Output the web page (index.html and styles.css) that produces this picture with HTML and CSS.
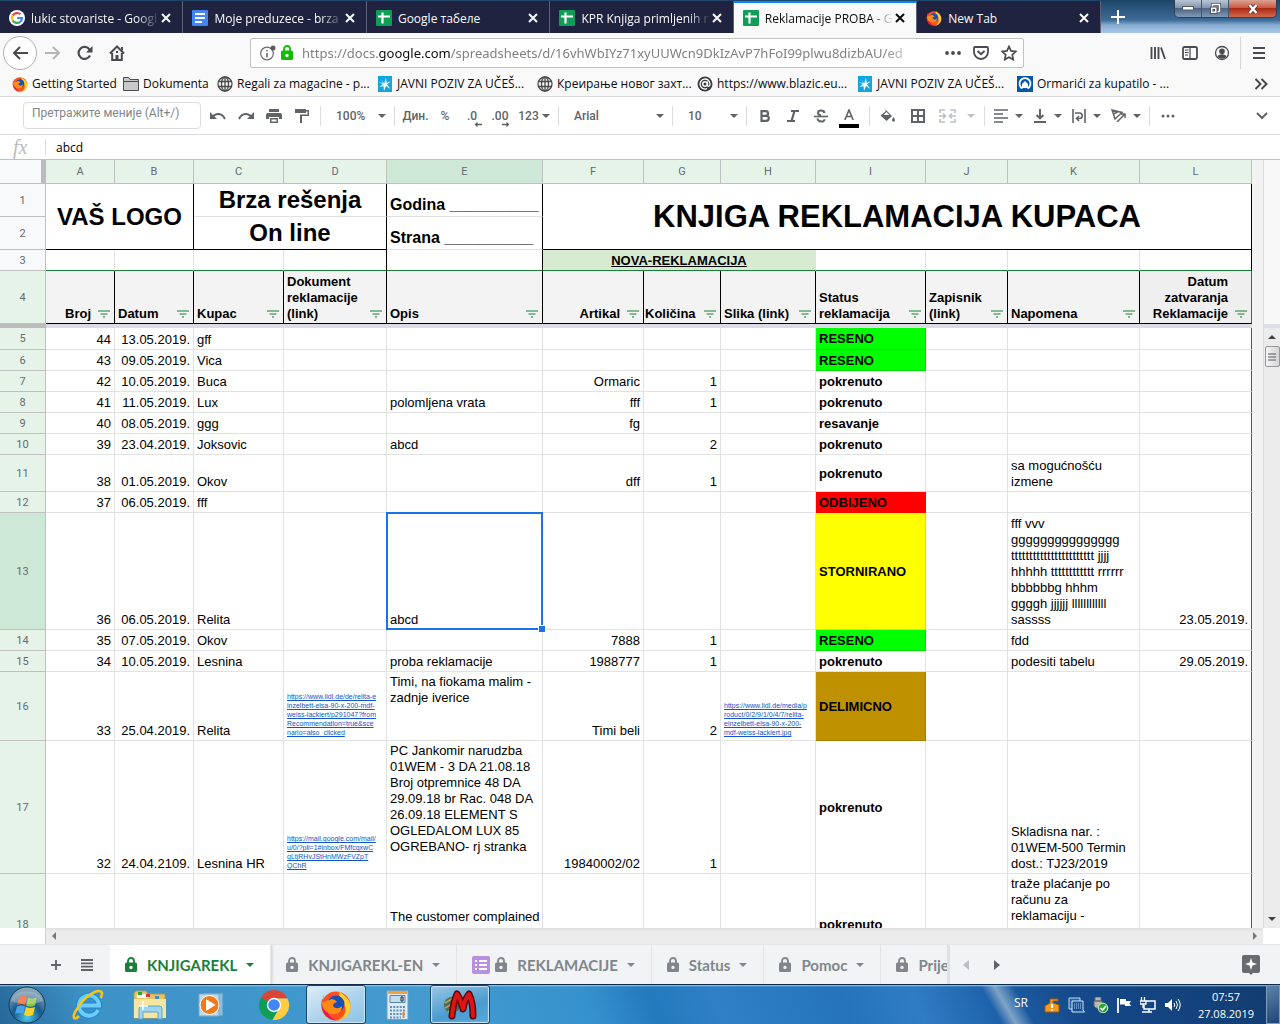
FILE: index.html
```
<!DOCTYPE html>
<html lang="sr">
<head>
  <meta charset="utf-8">
  <title>Reklamacije PROBA</title>
  <link rel="stylesheet" href="styles.css">
</head>
<body>
  <!-- shared icons -->
  <svg class="defs" width="0" height="0">
    <symbol id="x" viewBox="0 0 12 12"><path d="M2 2l8 8M10 2l-8 8" stroke="currentColor" stroke-width="2" fill="none"/></symbol>
    <symbol id="sheets" viewBox="0 0 16 16"><rect width="16" height="16" rx="1" fill="#0f9d58"/><path d="M2 6.500h12M6.500 2.500v11" stroke="#fff" stroke-width="2.200"/></symbol>
    <symbol id="firefox" viewBox="0 0 32 32">
      <circle cx="16" cy="17" r="14.500" fill="#ff4f1f"/>
      <path d="M20 2c2 4 9 6 10.500 14 1 8-5 15-13 15.500 8-4 10-11 6-17-3-4-6-7-3.500-12.500z" fill="#ffcf2e"/>
      <path d="M2 10c-2 9 2 20 14 21.500C9 28 5 22 7 14z" fill="#e3175c"/>
      <circle cx="16" cy="15" r="8.500" fill="#1a4fb5"/>
      <path d="M4 5c0 3 0 5-1 8 3-2 7-1 8-3 2 0 5 1 6 3-3 1-4 2-4 4 2 3 6 3 9 0 0 6-5 9-10 8-6-1-10-5-10-11z" fill="#ff8a16"/>
    </symbol>
    <symbol id="globe" viewBox="0 0 16 16"><g fill="none" stroke="#4a4a4a" stroke-width="1.300"><circle cx="8" cy="8" r="7"/><ellipse cx="8" cy="8" rx="3.500" ry="7"/><path d="M1.500 5.500h13M1.500 10.500h13M8 1v14"/></g></symbol>
    <symbol id="star-burst" viewBox="0 0 14 16"><rect width="14" height="16" fill="#12a5e0"/><path d="M2 3l4.500 4L8 1.500 8.500 7 13 5 9 8.500l3.500 4.500L8 10l-2 5-.5-5-4 1L5 8 1 6.500l5 .5z" fill="#fff"/></symbol>
    <symbol id="down" viewBox="0 0 8 4"><path d="M0 0h8L4 4z" fill="currentColor"/></symbol>
    <symbol id="filter" viewBox="0 0 12 8"><path d="M0 1h12M2.500 4h7M5 7h2" stroke="#188038" stroke-width="1.200"/></symbol>
    <symbol id="lock" viewBox="0 0 12 16"><path d="M3 6V4a3 3 0 0 1 6 0v2" fill="none" stroke="currentColor" stroke-width="1.800"/><path d="M1.500 5.500h9A1.500 1.500 0 0 1 12 7v6.500a1.500 1.500 0 0 1-1.500 1.500h-9A1.500 1.500 0 0 1 0 13.500V7a1.500 1.500 0 0 1 1.500-1.500zM6 8.700a1.700 1.700 0 1 0 0 3.400 1.700 1.700 0 0 0 0-3.400z" fill="currentColor" fill-rule="evenodd"/></symbol>
  </svg>

  <header class="titlebar">
    <div class="browser-tabs">
      <div class="tab">
        <svg width="16" height="16" viewBox="0 0 16 16"><circle cx="8" cy="8" r="8" fill="#fff"/><g fill="none" stroke-width="2.200"><path d="M11.400 4.300A5 5 0 0 0 3.700 5.500" stroke="#ea4335"/><path d="M3.700 5.500a5 5 0 0 0 0 5" stroke="#fbbc05"/><path d="M3.700 10.500a5 5 0 0 0 7.500 1.300" stroke="#34a853"/><path d="M11.200 11.800A5 5 0 0 0 13 8H8.200" stroke="#4285f4"/></g></svg>
        <span class="faded">lukic stovariste - Googl</span>
        <button class="close" aria-label="Close"><svg width="12" height="12"><use href="#x"/></svg></button>
      </div>
      <div class="tab">
        <svg width="16" height="16" viewBox="0 0 16 16"><rect width="16" height="16" rx="1" fill="#4285f4"/><path d="M3 4h10M3 8h10M3 12h7" stroke="#fff" stroke-width="1.800"/></svg>
        <span class="faded">Moje preduzece - brza</span>
        <button class="close" aria-label="Close"><svg width="12" height="12"><use href="#x"/></svg></button>
      </div>
      <div class="tab">
        <svg width="16" height="16"><use href="#sheets"/></svg>
        <span>Google табеле</span>
        <button class="close" aria-label="Close"><svg width="12" height="12"><use href="#x"/></svg></button>
      </div>
      <div class="tab">
        <svg width="16" height="16"><use href="#sheets"/></svg>
        <span class="faded">KPR Knjiga primljenih r</span>
        <button class="close" aria-label="Close"><svg width="12" height="12"><use href="#x"/></svg></button>
      </div>
      <div class="tab active">
        <svg width="16" height="16"><use href="#sheets"/></svg>
        <span class="faded">Reklamacije PROBA - G</span>
        <button class="close" aria-label="Close"><svg width="12" height="12"><use href="#x"/></svg></button>
      </div>
      <div class="tab">
        <svg width="16" height="16"><use href="#firefox"/></svg>
        <span>New Tab</span>
        <button class="close" aria-label="Close"><svg width="12" height="12"><use href="#x"/></svg></button>
      </div>
    </div>
    <button class="new-tab" aria-label="New tab"><svg width="16" height="16" viewBox="0 0 16 16"><path d="M8 1v14M1 8h14" stroke="#fff" stroke-width="2"/></svg></button>
    <div class="window-buttons">
      <button aria-label="Minimize"><svg width="12" height="5" viewBox="0 0 12 5"><rect x=".5" y=".5" width="11" height="3.500" fill="#fff" stroke="#555b6c"/></svg></button>
      <button aria-label="Restore"><svg width="12" height="12" viewBox="0 0 12 12"><path d="M3.500 1.500h7v7h-7z" fill="none" stroke="#4d5468" stroke-width="3"/><path d="M3.500 1.500h7v7h-7z" fill="none" stroke="#fff" stroke-width="1.500"/><rect x="1.500" y="4" width="6.500" height="6.500" fill="#fff" stroke="#4d5468"/><rect x="3.500" y="6" width="2.500" height="2.500" fill="#4d5468"/></svg></button>
      <button class="win-close" aria-label="Close window"><svg width="12" height="10" viewBox="0 0 12 10"><path d="M2.500 1l7 8M9.500 1l-7 8" stroke="#5c3038" stroke-width="4"/><path d="M2.500 1l7 8M9.500 1l-7 8" stroke="#fff" stroke-width="2.400"/></svg></button>
    </div>
  </header>

  <nav class="navbar">
    <button class="back" aria-label="Back"><svg width="18" height="16" viewBox="0 0 18 16"><path d="M17 8H3M9 2L3 8l6 6" fill="none" stroke="#4a4a4f" stroke-width="2"/></svg></button>
    <button class="nav-btn" aria-label="Forward"><svg width="18" height="16" viewBox="0 0 18 16"><path d="M1 8h14M9 2l6 6-6 6" fill="none" stroke="#b5b5b8" stroke-width="2"/></svg></button>
    <button class="nav-btn" aria-label="Reload"><svg width="16" height="16" viewBox="0 0 16 16"><path d="M13 10.500A6 6 0 1 1 12.500 4.500" fill="none" stroke="#4a4a4f" stroke-width="2.200"/><path d="M15.500 1v6.500H9z" fill="#4a4a4f"/></svg></button>
    <button class="nav-btn" aria-label="Home"><svg width="16" height="16" viewBox="0 0 16 16"><path d="M1 8.500L8 1.500l7 7M3.200 8v7h9.600V8" fill="none" stroke="#4a4a4f" stroke-width="2"/><path d="M7 6h2v2H7zM6.500 10h3v5h-3zM12 2h2v4l-2-2z" fill="#4a4a4f"/></svg></button>
    <div class="urlbar">
      <svg width="16" height="16" viewBox="0 0 16 16"><circle cx="7" cy="8.500" r="6.300" fill="none" stroke="#6b6b6f" stroke-width="1.200"/><path d="M7 5v1.500M7 8v4.500" stroke="#6b6b6f" stroke-width="1.600"/><circle cx="13" cy="3" r="2.500" fill="#5b5b5f"/></svg>
      <svg class="padlock" width="12" height="16"><use href="#lock"/></svg>
      <div class="url">https://docs.<b>google.com</b>/spreadsheets/d/16vhWbIYz71xyUUWcn9DkIzAvP7hFoI99plwu8dizbAU/ed</div>
      <button aria-label="Page actions"><svg width="16" height="16" viewBox="0 0 16 16"><g fill="#4a4a4f"><circle cx="2" cy="8" r="1.900"/><circle cx="8" cy="8" r="1.900"/><circle cx="14" cy="8" r="1.900"/></g></svg></button>
      <button aria-label="Pocket"><svg width="16" height="16" viewBox="0 0 16 16"><path d="M2 2h12a1 1 0 0 1 1 1v4a7 7 0 0 1-14 0V3a1 1 0 0 1 1-1z" fill="none" stroke="#4a4a4f" stroke-width="1.800"/><path d="M4.500 6L8 9.300 11.500 6" fill="none" stroke="#4a4a4f" stroke-width="1.900"/></svg></button>
      <button aria-label="Bookmark"><svg width="16" height="16" viewBox="0 0 16 16"><path d="M8 1.500l2 4.400 4.800.6-3.500 3.300.9 4.800L8 12.200l-4.200 2.400.9-4.800L1.200 6.500 6 5.900z" fill="none" stroke="#4a4a4f" stroke-width="1.700"/></svg></button>
    </div>
    <button class="nav-btn" aria-label="Library"><svg width="16" height="16" viewBox="0 0 16 16"><path d="M1.500 2v12M5 2v12M8.500 2v12M11 2.500l4 11.500" stroke="#4a4a4f" stroke-width="1.900"/></svg></button>
    <button class="nav-btn" aria-label="Sidebars"><svg width="16" height="16" viewBox="0 0 16 16"><rect x="1" y="2" width="14" height="12" rx="1.500" fill="none" stroke="#4a4a4f" stroke-width="1.800"/><path d="M8 2v12M3 5h3.500M3 7.500h3.500M3 10h3" stroke="#4a4a4f" stroke-width="1.200"/></svg></button>
    <button class="nav-btn" aria-label="Account"><svg width="16" height="16" viewBox="0 0 16 16"><circle cx="8" cy="8" r="6.500" fill="none" stroke="#4a4a4f" stroke-width="1.300"/><circle cx="8" cy="6.200" r="2.800" fill="#4a4a4f"/><path d="M3.500 11.500c1.500-3 7.500-3 9 0-2 3-7 3-9 0z" fill="#4a4a4f"/></svg></button>
    <button class="nav-btn menu" aria-label="Menu"><svg width="12" height="14" viewBox="0 0 12 14"><path d="M0 2h12M0 7h12M0 12h12" stroke="#4a4a4f" stroke-width="2"/></svg></button>
  </nav>

  <div class="bookmarks">
    <a href="#"><svg width="16" height="16"><use href="#firefox"/></svg>Getting Started</a>
    <a href="#"><svg width="16" height="14" viewBox="0 0 16 14"><path d="M.5 13.500V.5h5l1.500 2h8.500v11z" fill="#c9c9cb" stroke="#4a4a4f"/><path d="M1 4.500h14" stroke="#4a4a4f"/></svg>Dokumenta</a>
    <a href="#"><svg width="16" height="16"><use href="#globe"/></svg>Regali za magacine - p...</a>
    <a href="#"><svg width="16" height="16"><use href="#star-burst"/></svg>JAVNI POZIV ZA UČEŠ...</a>
    <a href="#"><svg width="16" height="16"><use href="#globe"/></svg>Креирање новог захт...</a>
    <a href="#"><svg width="16" height="16" viewBox="0 0 16 16"><circle cx="8" cy="8" r="7.500" fill="#3c3c3f"/><circle cx="8" cy="8" r="2.300" fill="none" stroke="#fff" stroke-width="1.500"/><path d="M10.500 5.500v4c.5 1.500 2.700 1 2.500-1.500A5 5 0 1 0 10 12.600" fill="none" stroke="#fff" stroke-width="1.300"/></svg>https://www.blazic.eu...</a>
    <a href="#"><svg width="16" height="16"><use href="#star-burst"/></svg>JAVNI POZIV ZA UČEŠ...</a>
    <a href="#"><svg width="16" height="16" viewBox="0 0 16 16"><rect width="16" height="16" fill="#0757a8"/><path d="M5.500 12.500a5.500 5.500 0 1 1 5 0" fill="none" stroke="#fff" stroke-width="1.800"/><path d="M8 5l3 3v4H5V8z" fill="#fff"/></svg>Ormarići za kupatilo - ...</a>
    <button aria-label="More bookmarks"><svg width="14" height="12" viewBox="0 0 14 12"><path d="M1.500 1l5 5-5 5M7.500 1l5 5-5 5" fill="none" stroke="#4a4a4f" stroke-width="2"/></svg></button>
  </div>

  <div class="toolbar">
    <input class="menu-search" type="text" placeholder="Претражите меније (Alt+/)" aria-label="Претражите меније">
    <button class="tool" aria-label="Undo"><svg width="16" height="8" viewBox="0 0 16 8"><path d="M0 0v7h7L4.500 4.500C8 1.500 12.500 3 14 7.500l1.800-.7C14 1 7.500-1 3 3z" fill="currentColor"/></svg></button>
    <button class="tool" aria-label="Redo"><svg width="16" height="8" viewBox="0 0 16 8"><path d="M16 0v7H9l2.500-2.500C8 1.500 3.500 3 2 7.500l-1.800-.7C2 1 8.500-1 13 3z" fill="currentColor"/></svg></button>
    <button class="tool" aria-label="Print"><svg width="16" height="14" viewBox="0 0 16 14"><path d="M3 0h10v3H3zM2 4h12a2 2 0 0 1 2 2v4h-3V8H3v2H0V6a2 2 0 0 1 2-2zM4 9h8v5H4z" fill="currentColor"/><path d="M5.500 10.500h5v2h-5z" fill="#fff"/></svg></button>
    <button class="tool" aria-label="Paint format"><svg width="14" height="14" viewBox="0 0 14 14"><path d="M0 0h11v4H0zM11 1h3v6H7v7H5V5.500h7.500V2.500H11z" fill="currentColor"/></svg></button>
    <i class="sep"></i>
    <label class="pick zoom-pick"><select aria-label="Zoom"><option>100%</option></select></label>
    <i class="sep"></i>
    <button class="tool wide">Дин.</button>
    <button class="tool small">%</button>
    <button class="tool decimals">.0<svg width="8" height="5" viewBox="0 0 8 5"><path d="M8 2.500H2M3.500.5l-2 2 2 2" fill="none" stroke="currentColor" stroke-width="1.300"/></svg></button>
    <button class="tool decimals">.00<svg width="8" height="5" viewBox="0 0 8 5"><path d="M0 2.500h6M4.500.5l2 2-2 2" fill="none" stroke="currentColor" stroke-width="1.300"/></svg></button>
    <button class="tool format">123<svg width="8" height="4"><use href="#down"/></svg></button>
    <i class="sep"></i>
    <label class="pick font-pick"><select aria-label="Font"><option>Arial</option></select></label>
    <i class="sep"></i>
    <label class="pick size-pick"><select aria-label="Font size"><option>10</option></select></label>
    <i class="sep"></i>
    <button class="tool" aria-label="Bold"><svg width="12" height="12" viewBox="0 0 12 12"><path d="M2.500 1.200h4.200a2.300 2.300 0 0 1 0 4.600H2.500zM2.500 5.800h4.800a2.500 2.500 0 0 1 0 5H2.500z" fill="none" stroke="currentColor" stroke-width="2.200"/></svg></button>
    <button class="tool" aria-label="Italic"><svg width="12" height="12" viewBox="0 0 12 12"><path d="M4 1h8M0 11h8M7.500 1l-3 10" stroke="currentColor" stroke-width="2.200"/></svg></button>
    <button class="tool" aria-label="Strikethrough"><svg width="14" height="14" viewBox="0 0 14 14"><path d="M10.500 4C10 .8 4 .8 4 4c0 1.300 1 2 3 2.500M3.500 9.500c.5 4 7 4 7 .8" fill="none" stroke="currentColor" stroke-width="2"/><path d="M0 7.500h14" stroke="currentColor" stroke-width="1.600"/></svg></button>
    <button class="tool text-color" aria-label="Text color"><svg width="10" height="11" viewBox="0 0 10 11"><path d="M.8 11L5 1l4.200 10M2.500 7.500h5" fill="none" stroke="currentColor" stroke-width="1.600"/></svg></button>
    <i class="sep"></i>
    <button class="tool fill" aria-label="Fill color"><svg width="16" height="16" viewBox="0 0 16 16"><path d="M4.500.5L6 2l6 6-5.500 5L.5 7.500 6 3z" fill="currentColor"/><path d="M3.500 7h6L6.500 4z" fill="#fff"/><path d="M13.500 9c2 2.500 2 4.500 0 4.800-2-.3-2-2.300 0-4.800z" fill="currentColor"/></svg></button>
    <button class="tool borders" aria-label="Borders"><svg width="14" height="14" viewBox="0 0 14 14"><path d="M1 1h12v12H1zM7 1v12M1 7h12" fill="none" stroke="currentColor" stroke-width="2"/></svg></button>
    <button class="tool merge" aria-label="Merge cells"><svg width="17" height="14" viewBox="0 0 17 14"><path d="M1 4V1h5M11 1h5v3M1 10v3h5M11 13h5v-3M0 7h6M4 4.500L6.500 7 4 9.500M17 7h-6M13 4.500L10.500 7 13 9.500" fill="none" stroke="currentColor" stroke-width="1.700"/></svg><svg width="8" height="4"><use href="#down"/></svg></button>
    <i class="sep"></i>
    <button class="tool pair" aria-label="Horizontal align"><svg width="14" height="14" viewBox="0 0 14 14"><path d="M0 1h14M0 5h9M0 9h14M0 13h9" stroke="currentColor" stroke-width="1.700"/></svg><svg width="8" height="4"><use href="#down"/></svg></button>
    <button class="tool pair" aria-label="Vertical align"><svg width="14" height="14" viewBox="0 0 14 14"><path d="M1 13h12M7 0v9M3.500 6L7 9.500 10.500 6" fill="none" stroke="currentColor" stroke-width="1.900"/></svg><svg width="8" height="4"><use href="#down"/></svg></button>
    <button class="tool pair" aria-label="Text wrapping"><svg width="14" height="14" viewBox="0 0 14 14"><path d="M1 0v14M13 0v14M3 4h4.500a2.600 2.600 0 0 1 0 5.500H5M7 7L4.500 9.500 7 12" fill="none" stroke="currentColor" stroke-width="1.600"/></svg><svg width="8" height="4"><use href="#down"/></svg></button>
    <button class="tool pair" aria-label="Text rotation"><svg width="15" height="13" viewBox="0 0 15 13"><path d="M1 1l10 2.500L4 10zM7.500 2.500L2.500 5M6 13l8-8M10 5h4v4" fill="none" stroke="currentColor" stroke-width="1.500"/></svg><svg width="8" height="4"><use href="#down"/></svg></button>
    <i class="sep"></i>
    <button class="tool" aria-label="More"><svg width="14" height="4" viewBox="0 0 14 4"><g fill="currentColor"><circle cx="2" cy="2" r="1.500"/><circle cx="7" cy="2" r="1.500"/><circle cx="12" cy="2" r="1.500"/></g></svg></button>
    <button class="tool collapse" aria-label="Hide the menus"><svg width="12" height="8" viewBox="0 0 12 8"><path d="M1 1l5 5 5-5" fill="none" stroke="currentColor" stroke-width="2"/></svg></button>
  </div>

  <div class="formula">
    <label for="fx">fx</label>
    <input id="fx" type="text" value="abcd">
  </div>

  <main class="sheet">
    <table>
      <colgroup>
        <col class="w-num"><col class="w-a"><col class="w-b"><col class="w-c"><col class="w-d"><col class="w-e"><col class="w-f"><col class="w-g"><col class="w-h"><col class="w-i"><col class="w-j"><col class="w-k"><col class="w-l">
      </colgroup>
      <thead>
        <tr class="letters"><th class="corner"></th><th>A</th><th>B</th><th>C</th><th>D</th><th class="on">E</th><th>F</th><th>G</th><th>H</th><th>I</th><th>J</th><th>K</th><th>L</th></tr>
      </thead>
      <tbody class="frozen">
        <tr class="r33"><th class="plain">1</th><td colspan="2" rowspan="2" class="logo br bb">VAŠ LOGO</td><td colspan="2" class="big br">Brza rešenja</td><td class="year br">Godina __________</td><td colspan="7" rowspan="2" class="title br bb">KNJIGA REKLAMACIJA KUPACA</td></tr>
        <tr class="r33"><th class="plain">2</th><td colspan="2" class="big br bb">On line</td><td class="year br">Strana __________</td></tr>
        <tr class="r21 third"><th class="plain">3</th><td></td><td></td><td></td><td class="br"></td><td class="br"></td><td colspan="3" class="nova"><a href="#">NOVA-REKLAMACIJA</a></td><td></td><td></td><td></td><td class="br"></td></tr>
        <tr class="heads">
          <th>4</th>
          <td><div class="right"><span>Broj</span><svg width="12" height="8"><use href="#filter"/></svg></div></td>
          <td><div><span>Datum</span><svg width="12" height="8"><use href="#filter"/></svg></div></td>
          <td><div><span>Kupac</span><svg width="12" height="8"><use href="#filter"/></svg></div></td>
          <td><div><span>Dokument<br>reklamacije<br>(link)</span><svg width="12" height="8"><use href="#filter"/></svg></div></td>
          <td><div><span>Opis</span><svg width="12" height="8"><use href="#filter"/></svg></div></td>
          <td><div class="right"><span>Artikal</span><svg width="12" height="8"><use href="#filter"/></svg></div></td>
          <td class="tight"><div><span>Količina</span><svg width="12" height="8"><use href="#filter"/></svg></div></td>
          <td><div><span>Slika (link)</span><svg width="12" height="8"><use href="#filter"/></svg></div></td>
          <td><div><span>Status<br>reklamacija</span><svg width="12" height="8"><use href="#filter"/></svg></div></td>
          <td><div><span>Zapisnik<br>(link)</span><svg width="12" height="8"><use href="#filter"/></svg></div></td>
          <td><div><span>Napomena</span><svg width="12" height="8"><use href="#filter"/></svg></div></td>
          <td class="last"><div class="right"><span>Datum<br>zatvaranja<br>Reklamacije</span><svg width="12" height="8"><use href="#filter"/></svg></div></td>
        </tr>
        <tr class="freeze"><th></th><td colspan="12"></td></tr>
      </tbody>
      <tbody class="data">
        <tr class="r22"><th>5</th><td>44</td><td>13.05.2019.</td><td>gff</td><td></td><td></td><td></td><td></td><td></td><td class="reseno">RESENO</td><td></td><td></td><td></td></tr>
        <tr class="r21"><th>6</th><td>43</td><td>09.05.2019.</td><td>Vica</td><td></td><td></td><td></td><td></td><td></td><td class="reseno">RESENO</td><td></td><td></td><td></td></tr>
        <tr class="r21"><th>7</th><td>42</td><td>10.05.2019.</td><td>Buca</td><td></td><td></td><td>Ormaric</td><td>1</td><td></td><td>pokrenuto</td><td></td><td></td><td></td></tr>
        <tr class="r21"><th>8</th><td>41</td><td>11.05.2019.</td><td>Lux</td><td></td><td>polomljena vrata</td><td>fff</td><td>1</td><td></td><td>pokrenuto</td><td></td><td></td><td></td></tr>
        <tr class="r21"><th>9</th><td>40</td><td>08.05.2019.</td><td>ggg</td><td></td><td></td><td>fg</td><td></td><td></td><td>resavanje</td><td></td><td></td><td></td></tr>
        <tr class="r21"><th>10</th><td>39</td><td>23.04.2019.</td><td>Joksovic</td><td></td><td>abcd</td><td></td><td>2</td><td></td><td>pokrenuto</td><td></td><td></td><td></td></tr>
        <tr class="r37"><th>11</th><td>38</td><td>01.05.2019.</td><td>Okov</td><td></td><td></td><td>dff</td><td>1</td><td></td><td>pokrenuto</td><td></td><td>sa mogućnošću<br>izmene</td><td></td></tr>
        <tr class="r21"><th>12</th><td>37</td><td>06.05.2019.</td><td>fff</td><td></td><td></td><td></td><td></td><td></td><td class="odbijeno">ODBIJENO</td><td></td><td></td><td></td></tr>
        <tr class="r117"><th class="on">13</th><td>36</td><td>06.05.2019.</td><td>Relita</td><td></td><td class="selected">abcd<i class="handle"></i></td><td></td><td></td><td></td><td class="stornirano">STORNIRANO</td><td></td><td>fff vvv<br>ggggggggggggggg<br>ttttttttttttttttttttttt jjjj<br>hhhhh tttttttttttt rrrrrr<br>bbbbbbg hhhm<br>ggggh jjjjjj llllllllllll<br>sassss</td><td>23.05.2019.</td></tr>
        <tr class="r21"><th>14</th><td>35</td><td>07.05.2019.</td><td>Okov</td><td></td><td></td><td>7888</td><td>1</td><td></td><td class="reseno">RESENO</td><td></td><td>fdd</td><td></td></tr>
        <tr class="r21"><th>15</th><td>34</td><td>10.05.2019.</td><td>Lesnina</td><td></td><td>proba reklamacije</td><td>1988777</td><td>1</td><td></td><td>pokrenuto</td><td></td><td>podesiti tabelu</td><td>29.05.2019.</td></tr>
        <tr class="r69"><th>16</th><td>33</td><td>25.04.2019.</td><td>Relita</td><td class="link"><a href="#">https://www.lidl.de/de/relita-e<br>inzelbett-elsa-90-x-200-mdf-<br>weiss-lackiert/p291047?from<br>Recommendation=true&amp;sce<br>nario=also_clicked</a></td><td class="top">Timi, na fiokama malim -<br>zadnje iverice</td><td>Timi beli</td><td>2</td><td class="link"><a href="#">https://www.lidl.de/media/p<br>roduct/0/2/9/1/0/4/7/relita-<br>einzelbett-elsa-90-x-200-<br>mdf-weiss-lackiert.jpg</a></td><td class="delimicno">DELIMICNO</td><td></td><td></td><td></td></tr>
        <tr class="r133"><th>17</th><td>32</td><td>24.04.2109.</td><td>Lesnina HR</td><td class="link"><a href="#">https://mail.google.com/mail/<br>u/0/?pli=1#inbox/FMfcgxwC<br>qLtjRHvJStHnMWzFVZpT<br>QChR</a></td><td class="top">PC Jankomir narudzba<br>01WEM - 3 DA 21.08.18<br>Broj otpremnice 48 DA<br>29.09.18 br Rac. 048 DA<br>26.09.18 ELEMENT S<br>OGLEDALOM LUX 85<br>OGREBANO- rj stranka</td><td>19840002/02</td><td>1</td><td></td><td>pokrenuto</td><td></td><td>Skladisna nar. :<br>01WEM-500 Termin<br>dost.: TJ23/2019</td><td></td></tr>
        <tr class="r101"><th>18</th><td></td><td></td><td></td><td></td><td>The customer complained<br><br><br><br></td><td></td><td></td><td></td><td>pokrenuto</td><td></td><td class="top">traže plaćanje po<br>računu za<br>reklamaciju -</td><td></td></tr>
      </tbody>
    </table>
    <div class="gutter"></div>
    <div class="vscroll">
      <div class="vscroll-head"></div>
      <button aria-label="Scroll up"><svg width="8" height="4" viewBox="0 0 8 4"><path d="M0 4h8L4 0z" fill="#444"/></svg></button>
      <div class="thumb"><svg width="8" height="8" viewBox="0 0 8 8"><path d="M0 1h8M0 4h8M0 7h8" stroke="#555"/></svg></div>
      <button class="scroll-down" aria-label="Scroll down"><svg width="8" height="4" color="#444"><use href="#down"/></svg></button>
    </div>
  </main>

  <div class="hscroll">
    <button aria-label="Scroll left"><svg width="4" height="8" viewBox="0 0 4 8"><path d="M4 0v8L0 4z" fill="#777"/></svg></button>
    <button aria-label="Scroll right"><svg width="4" height="8" viewBox="0 0 4 8"><path d="M0 0v8l4-4z" fill="#777"/></svg></button>
  </div>

  <div class="sheet-tabs">
    <button class="tab-tool" aria-label="Add sheet"><svg width="10" height="10" viewBox="0 0 10 10"><path d="M5 0v10M0 5h10" stroke="#5f6368" stroke-width="1.800"/></svg></button>
    <button class="tab-tool" aria-label="All sheets"><svg width="12" height="12" viewBox="0 0 12 12"><path d="M0 1h12M0 4.300h12M0 7.700h12M0 11h12" stroke="#5f6368" stroke-width="1.800"/></svg></button>
    <div class="tab-strip">
      <button class="sheet-tab current"><svg width="12" height="16"><use href="#lock"/></svg><span>KNJIGAREKL</span><svg class="arrow" width="8" height="4"><use href="#down"/></svg></button>
      <button class="sheet-tab"><svg width="12" height="16"><use href="#lock"/></svg><span>KNJIGAREKL-EN</span><svg class="arrow" width="8" height="4"><use href="#down"/></svg></button>
      <button class="sheet-tab"><svg class="form" width="18" height="18" viewBox="0 0 18 18"><rect width="18" height="18" rx="2" fill="#b98fe0"/><path d="M3 5h2M3 9h2M3 13h2M7 5h8M7 9h8M7 13h8" stroke="#fff" stroke-width="1.800"/></svg><svg width="12" height="16"><use href="#lock"/></svg><span>REKLAMACIJE</span><svg class="arrow" width="8" height="4"><use href="#down"/></svg></button>
      <button class="sheet-tab"><svg width="12" height="16"><use href="#lock"/></svg><span>Status</span><svg class="arrow" width="8" height="4"><use href="#down"/></svg></button>
      <button class="sheet-tab"><svg width="12" height="16"><use href="#lock"/></svg><span>Pomoc</span><svg class="arrow" width="8" height="4"><use href="#down"/></svg></button>
      <button class="sheet-tab"><svg width="12" height="16"><use href="#lock"/></svg><span>Prije</span></button>
    </div>
    <button class="tab-tool" aria-label="Previous sheets"><svg width="6" height="10" viewBox="0 0 6 10"><path d="M6 0v10L0 5z" fill="#bcbec1"/></svg></button>
    <button class="tab-tool" aria-label="Next sheets"><svg width="6" height="10" viewBox="0 0 6 10"><path d="M0 0v10l6-5z" fill="#5f6368"/></svg></button>
    <button class="explore" aria-label="Explore"><svg width="18" height="20" viewBox="0 0 18 20"><path d="M2 0h14a2 2 0 0 1 2 2v14a2 2 0 0 1-2 2h-5l-2 2-2-2H2a2 2 0 0 1-2-2V2a2 2 0 0 1 2-2z" fill="#696b6e"/><path d="M9 3l1.500 4.500L15 9l-4.500 1.500L9 15l-1.500-4.500L3 9l4.500-1.500z" fill="#fff"/></svg></button>
  </div>

  <footer class="taskbar">
    <button class="start" aria-label="Start">
      <svg width="38" height="38" viewBox="0 0 38 38"><defs><radialGradient id="orb" cx=".5" cy=".85" r=".8"><stop offset="0" stop-color="#45c8ee"/><stop offset=".5" stop-color="#17598c"/><stop offset="1" stop-color="#8fa9ba"/></radialGradient></defs><circle cx="19" cy="19" r="18" fill="url(#orb)" stroke="#123a58"/><path d="M11 11c3-2 5-1.500 8 0l-2 8c-3-1.500-5-1.500-8 0z" fill="#ee5a24"/><path d="M20 11.500c3 1.500 5 1.500 9 0l-2 8c-3 1.500-6 1.500-9 0z" fill="#8cc63f"/><path d="M9 20.500c3-1.500 5-1.500 8 0l-2 7.500c-3-1.500-5-1.500-8 0z" fill="#4aa3e8"/><path d="M18 21c3 1.500 5 1.500 9 0l-2 8c-3 1.500-6 1.500-9 0z" fill="#fcd12a"/><path d="M3 15C6 2 32 2 35 15c-8 4-24 4-32 0z" fill="#fff" opacity=".25"/></svg>
    </button>
    <button class="app" aria-label="Internet Explorer"><svg width="32" height="32" viewBox="0 0 32 32"><path d="M26 21A10 10 0 1 1 27 16.500H9" fill="none" stroke="#1f86d8" stroke-width="6"/><path d="M26 21A10 10 0 1 1 27 16.500H9" fill="none" stroke="#6fcdf9" stroke-width="4"/><path d="M7 27C1 33 0 27 5 20 11 9 24 0 29 2.500c2 1.500 1 4-.5 6.500" fill="none" stroke="#f5c518" stroke-width="2.600"/></svg></button>
    <button class="app" aria-label="Explorer"><svg width="34" height="32" viewBox="0 0 34 32"><path d="M1 4l2-2h10l2 3h17v24H1z" fill="#e3c467" stroke="#b6954a"/><path d="M4 5h12v4H4z" fill="#fff"/><path d="M5 3h4v3H5z" fill="#2ca52c"/><path d="M13 5h4v3h-4z" fill="#d33"/><path d="M22 7h4v3h-4z" fill="#3a8bd8"/><path d="M1 10h32v19H1z" fill="#f7e6a2"/><path d="M6 30V20q0-3 3-3h17q3 0 3 3v10h-4v-7H10v7z" fill="#9fd4ee" stroke="#5aa6cc"/><path d="M10 12v9M6 17h9" stroke="#fff" stroke-width="1.500"/></svg></button>
    <button class="app" aria-label="Media Player"><svg width="28" height="26" viewBox="0 0 28 26"><path d="M5 1h20v23H5z" fill="#8abfe0" stroke="#5592bd"/><path d="M1 2h20v22H1z" fill="#b8d9ee" stroke="#76a9cb"/><circle cx="11.500" cy="13" r="9.500" fill="#f07a19" stroke="#fff"/><path d="M8 7l9.500 6L8 19z" fill="#fff"/></svg></button>
    <button class="app" aria-label="Chrome"><svg width="32" height="32" viewBox="0 0 32 32"><path d="M16 16L3 8.500A15 15 0 0 1 29.500 9.500H16z" fill="#db4437"/><path d="M16 16L3 8.500A15 15 0 0 0 14.500 31L21 19.500z" fill="#0f9d58"/><path d="M16 9.500h13.500A15 15 0 0 1 14.500 31L22 18z" fill="#ffcd40"/><circle cx="16" cy="16" r="7.200" fill="#fff"/><circle cx="16" cy="16" r="5.800" fill="#4285f4"/></svg></button>
    <button class="app open" aria-label="Firefox"><svg width="32" height="32"><use href="#firefox"/></svg></button>
    <button class="app" aria-label="Calculator"><svg width="24" height="30" viewBox="0 0 24 30"><rect x="1" y=".5" width="21" height="29" rx="1" fill="#dcebf5" stroke="#6f9fc2"/><path d="M2 1h19v3H2z" fill="#f0a23c"/><path d="M4 5.500h15v7H4z" fill="#c5dcec" stroke="#5b86a6"/><path d="M15 7h2v4h-2z" fill="none" stroke="#234"/><path d="M4 17h15M4 20.500h15M4 24h15M4 27.500h11" stroke="#5f93bd" stroke-width="2" stroke-dasharray="2 1.250"/><path d="M17.500 22v6" stroke="#e88a28" stroke-width="2"/></svg></button>
    <button class="app running" aria-label="M"><svg width="34" height="32" viewBox="0 0 34 32"><circle cx="9" cy="16" r="8" fill="#476f58"/><path d="M2 14l10-6M2 19l11-6M5 23l8-5" stroke="#c39c5c" stroke-width="1.500"/><path d="M9 27C10 17 11 11 14 5c3 4 4 8 6 15 1-7 3-11 6-15 3 6 4 13 4 22" fill="none" stroke="#5e0707" stroke-width="7" stroke-linecap="round" stroke-linejoin="round"/><path d="M9 27C10 17 11 11 14 5c3 4 4 8 6 15 1-7 3-11 6-15 3 6 4 13 4 22" fill="none" stroke="#db1414" stroke-width="4" stroke-linecap="round" stroke-linejoin="round"/></svg></button>
    <div class="tray">
      <span class="lang">SR</span>
      <svg width="17" height="16" viewBox="0 0 17 16"><path d="M1 15V9l5-3V2h8v2h-5v2l6 2v7z" fill="#f59a1b" stroke="#a75b07"/><path d="M8 7v4M8 12.500v1.500" stroke="#fff" stroke-width="2"/></svg>
      <svg width="17" height="16" viewBox="0 0 17 16"><path d="M1 1h11v11H1z" fill="#2863a8" stroke="#b8d8f5"/><path d="M4 4h11v9l1.500 2H4z" fill="#174f96" stroke="#d5e9fb"/><path d="M6 7h7M6 9h7M6 11h7" stroke="#a6d0f5" stroke-dasharray="1 1"/></svg>
      <svg width="17" height="16" viewBox="0 0 17 16"><path d="M3 0h6v4H3zM2 4h8v5l-2 2H4L2 9z" fill="#b7b7b7" stroke="#666"/><circle cx="11" cy="11" r="4.800" fill="#25a62c" stroke="#d7f0d7"/><path d="M8.500 11l2 2L14 9" fill="none" stroke="#fff" stroke-width="1.600"/></svg>
      <svg width="17" height="16" viewBox="0 0 17 16"><path d="M2 1v15" stroke="#fff" stroke-width="1.800"/><path d="M4 2h6v2h5l-1.500 2.500L15 9H9V7.500H4z" fill="#fff"/></svg>
      <svg width="17" height="16" viewBox="0 0 17 16"><path d="M6 4h9v8H4V8M2 15h10M9 12v3" fill="none" stroke="#fff" stroke-width="1.500"/><path d="M1.500 0v4M4.500 0v4M0 4h6v3H0zM3 7v4" fill="none" stroke="#fff" stroke-width="1.300"/></svg>
      <svg width="17" height="16" viewBox="0 0 17 16"><path d="M1 6h3l4-4v12l-4-4H1z" fill="#fff"/><path d="M10 6q1.500 2 0 4M12 4q3 4 0 8M14 2q4.500 6 0 12" fill="none" stroke="#fff"/></svg>
      <time>07:57<br>27.08.2019</time>
      <button class="desktop" aria-label="Show desktop"></button>
    </div>
  </footer>
</body>
</html>
```
FILE: styles.css
```
* {
  box-sizing: border-box;
}

body {
  display: flex;
  flex-direction: column;
  height: 100vh;
  margin: 0;
  overflow: hidden;
  font-family: "Open Sans", "Noto Sans", sans-serif;
  font-size: 12px;
  color: #0c0c0d;
  background: #fff;
}

svg {
  display: block;
  flex: none;
}

.defs {
  position: absolute;
}

button {
  display: flex;
  align-items: center;
  justify-content: center;
  flex: none;
  padding: 0;
  border: none;
  background: none;
  font: inherit;
  color: inherit;
}

input,
select {
  font: inherit;
  color: inherit;
}

a {
  color: inherit;
  text-decoration: none;
}

/* browser tabs */
.titlebar {
  display: flex;
  flex: none;
  height: 33px;
  background: linear-gradient(#1d4568 0, #3d6b96 20px, #86abd1 25px, #a8c8e8);
}

.browser-tabs {
  display: grid;
  grid-template-columns: repeat(6, 1fr);
  width: 86%;
  padding-top: 1px;
}

.tab {
  display: flex;
  align-items: center;
  gap: 6px;
  min-width: 0;
  padding: 2px 10px 0 9px;
  border-right: 1px solid #5d6079;
  background: #20233f;
  color: #f9f9fa;
}

.tab span {
  flex: 1;
  margin-right: -6px;
  white-space: nowrap;
}

.tab .faded {
  -webkit-mask-image: linear-gradient(90deg, #000 82%, transparent);
  mask-image: linear-gradient(90deg, #000 82%, transparent);
}

.tab.active {
  padding-top: 0;
  border-top: 2px solid #0a84ff;
  background: #f9f9fa;
  color: #0c0c0d;
}

.new-tab {
  width: 34px;
}

.window-buttons {
  display: flex;
  height: 18px;
  margin: 0 3px 0 auto;
  border: 1px solid #2c3d54;
  border-top: none;
  border-radius: 0 0 5px 5px;
  overflow: hidden;
}

.window-buttons button {
  width: 27px;
  border-right: 1px solid #46566c;
  background: linear-gradient(#b9c6d5, #8295ad 45%, #4d6583 50%, #7f9ab8);
}

.window-buttons .win-close {
  width: 47px;
  border-right: none;
  background: linear-gradient(#dba394, #cb5a45 45%, #ac2a14 50%, #d4694b);
}

/* navigation */
.navbar {
  display: flex;
  align-items: center;
  flex: none;
  height: 40px;
  padding: 0 3px;
  background: #f9f9fa;
}

.back {
  width: 34px;
  height: 34px;
  border: 1px solid #b1b1b3;
  border-radius: 50%;
  background: #fff;
}

.nav-btn {
  width: 32px;
  height: 32px;
}

.nav-btn.menu {
  width: 37px;
  margin-left: 2px;
  border-left: 1px solid #d7d7db;
}

.urlbar {
  display: flex;
  align-items: center;
  flex: 1;
  gap: 12px;
  height: 30px;
  min-width: 0;
  margin: 0 118px 0 117px;
  padding: 0 6px 0 9px;
  border: 1px solid #c3c3c6;
  border-radius: 2px;
  background: #fff;
}

.padlock {
  margin-left: -7px;
  color: #12bc00;
}

.url {
  flex: 1;
  margin: 0 13px 0 -3px;
  overflow: hidden;
  white-space: nowrap;
  font-family: "Noto Sans", sans-serif;
  font-size: 13px;
  color: #808083;
  -webkit-mask-image: linear-gradient(90deg, #000 94%, transparent);
  mask-image: linear-gradient(90deg, #000 94%, transparent);
}

.url b {
  font-weight: normal;
  color: #0c0c0d;
}

/* bookmarks */
.bookmarks {
  display: grid;
  grid-template-columns: 111px 94px repeat(5, 160px) 1fr auto;
  align-items: center;
  flex: none;
  height: 24px;
  padding: 0 12px 2px;
  border-bottom: 1px solid #d7d7db;
  background: #f9f9fa;
}

.bookmarks a {
  display: flex;
  align-items: center;
  gap: 4px;
  white-space: nowrap;
}

/* sheet toolbar */
.toolbar {
  display: flex;
  align-items: center;
  flex: none;
  height: 38px;
  padding: 0 4px 0 23px;
  border-bottom: 1px solid #dadce0;
  font-family: Roboto, sans-serif;
  font-weight: 500;
  color: #5f6368;
}

.menu-search {
  width: 178px;
  height: 27px;
  margin-right: 3px;
  padding: 0 8px 6px;
  border: 1px solid #dadce0;
  border-radius: 4px;
  font-weight: 400;
}

.menu-search::placeholder {
  color: #80868b;
}

.tool {
  width: 28px;
  height: 28px;
}

.sep {
  flex: none;
  width: 1px;
  height: 20px;
  margin: 0 4px;
  background: #dadce0;
}

.pick {
  display: grid;
  align-items: center;
}

.pick select {
  grid-area: 1 / 1;
  width: 100%;
  padding: 0 0 0 11px;
  border: none;
  appearance: none;
  background: none;
}

.pick::after {
  content: "";
  grid-area: 1 / 1;
  justify-self: end;
  margin-right: 4px;
  border: 4px solid transparent;
  border-top-color: #5f6368;
  border-bottom: none;
  pointer-events: none;
}

.zoom-pick,
.size-pick {
  width: 65px;
}

.font-pick {
  width: 105px;
}

.tool.wide {
  width: 33px;
}

.tool.small {
  width: 26px;
}

.tool.decimals {
  flex-direction: column;
  align-items: center;
  line-height: 12px;
  padding-top: 6px;
}

.tool.decimals svg {
  align-self: flex-end;
  margin-right: 4px;
}

.tool.format {
  gap: 3px;
  width: 40px;
}

.text-color {
  margin-right: 2px;
}

.text-color svg {
  box-sizing: content-box;
  margin-top: 5px;
  padding: 0 5px 4px;
  border-bottom: 4px solid #000;
}

.tool.borders {
  width: 32px;
}

.tool.merge {
  gap: 11px;
  width: 46px;
  color: #bdc1c6;
}

.tool.pair {
  gap: 7px;
  width: 39px;
}

.collapse {
  margin-left: auto;
}

/* formula bar */
.formula {
  display: flex;
  align-items: center;
  flex: none;
  height: 25px;
  border-bottom: 1px solid #c0c0c0;
}

.formula label {
  width: 46px;
  padding-left: 13px;
  border-right: 1px solid #dadce0;
  font: italic 20px/16px "Liberation Serif", serif;
  color: #bbb;
}

.formula input {
  flex: 1;
  padding: 0 10px;
  border: none;
  color: #000;
}

/* grid */
.sheet {
  display: flex;
  flex: 1;
  min-height: 0;
  overflow: hidden;
  background: #f3f3f3;
}

table {
  flex: none;
  align-self: flex-start;
  width: 1252px;
  border-collapse: separate;
  border-spacing: 0;
  table-layout: fixed;
  background: #fff;
  font-family: "Liberation Sans", Arial, sans-serif;
  font-size: 13px;
  line-height: 16px;
  color: #000;
}

.w-num { width: 46px; }
.w-a { width: 69px; }
.w-b { width: 79px; }
.w-c { width: 90px; }
.w-d { width: 103px; }
.w-e { width: 156px; }
.w-f { width: 101px; }
.w-g { width: 77px; }
.w-h { width: 95px; }
.w-i { width: 110px; }
.w-j { width: 82px; }
.w-k { width: 132px; }
.w-l { width: 112px; }

th {
  padding: 0;
  border-right: 1px solid #c0c0c0;
  border-bottom: 1px solid #c0c0c0;
  background: #e6f3e9;
  font: 11px/13px Roboto, sans-serif;
  color: #666b70;
}

th.on {
  background: #cde8d6;
}

th.plain {
  background: #f8f9fa;
}

.letters th {
  height: 24px;
}

.letters .corner {
  border-right: 5px solid #bcbcbc;
  background: #f8f9fa;
}

td {
  padding: 2px 3px 1px;
  border-right: 1px solid #e2e2e2;
  border-bottom: 1px solid #e2e2e2;
  vertical-align: bottom;
  white-space: nowrap;
}

.r21 { height: 21px; }
.r22 { height: 22px; }
.r33 { height: 33px; }
.r37 { height: 37px; }
.r69 { height: 69px; }
.r101 { height: 101px; }
.r117 { height: 117px; }
.r133 { height: 133px; }

.logo,
.big,
.title {
  padding: 0;
  text-align: center;
  vertical-align: middle;
  font-size: 24px;
  line-height: 28px;
  font-weight: bold;
}

.title {
  font-size: 31px;
  line-height: 36px;
}

.year {
  padding-bottom: 2px;
  font-size: 16px;
  line-height: 18px;
  font-weight: bold;
}

.third td {
  border-bottom-color: #188038;
}

.third .nova {
  background: #d9ead3;
  text-align: center;
  font-weight: bold;
}

.nova a {
  text-decoration: underline;
}

.frozen .br {
  border-right-color: #000;
}

.frozen .bb {
  border-bottom-color: #000;
}

.heads {
  height: 53px;
}

.heads td {
  border-right-color: #000;
  border-bottom-color: #000;
  background: #f3f3f3;
  font-weight: bold;
}

.heads div {
  display: flex;
  align-items: flex-end;
  justify-content: space-between;
}

.heads .right {
  justify-content: flex-end;
  gap: 7px;
  text-align: right;
}

.heads .tight {
  padding-left: 1px;
}

.heads svg {
  margin: 0 1px 4px 0;
}

.heads .last {
  border-right-color: #188038;
  background: #efefef;
}

.freeze th,
.freeze td {
  height: 4px;
  padding: 0;
  border: none;
  background: #dcdae6;
}

.freeze th {
  background: #bcbcbc;
}

.data td:nth-child(2),
.data td:nth-child(3),
.data td:nth-child(7),
.data td:nth-child(8),
.data td:nth-child(13) {
  text-align: right;
}

.data td:nth-child(13) {
  border-right-color: #188038;
}

.data td:nth-child(10) {
  vertical-align: middle;
  font-weight: bold;
}

.data .top {
  vertical-align: top;
}

.data .reseno {
  border-color: #00e000;
  background: #00ff00;
}

.data .odbijeno {
  border-color: #ff0000;
  background: #ff0000;
}

.data .stornirano {
  border-color: #e0e000;
  background: #ffff00;
}

.data .delimicno {
  border-color: #a88000;
  background: #bf9000;
}

.data .link {
  padding-bottom: 3px;
  font-size: 7px;
  line-height: 9px;
  color: #1155cc;
}

.link a {
  text-decoration: underline;
}

.selected {
  position: relative;
}

.selected::after {
  content: "";
  position: absolute;
  inset: -1px;
  border: 2px solid #1a73e8;
}

.handle {
  position: absolute;
  z-index: 1;
  right: -4px;
  bottom: -4px;
  width: 8px;
  height: 8px;
  border: 1px solid #fff;
  background: #1a73e8;
}

/* scrollbars */
.gutter {
  flex: 1;
}

.vscroll {
  display: flex;
  flex-direction: column;
  align-items: center;
  width: 17px;
  border-left: 1px solid #dcdcdc;
  background: #ececec;
}

.vscroll-head {
  width: 100%;
  height: 168px;
  border-bottom: 4px solid #dde0e8;
  background: #f8f8f8;
}

.vscroll button {
  width: 16px;
  height: 18px;
}

.thumb {
  display: flex;
  align-items: center;
  justify-content: center;
  width: 15px;
  height: 21px;
  border: 1px solid #979797;
  border-radius: 2px;
  background: linear-gradient(90deg, #f5f5f5, #d4d4d8);
}

.vscroll .scroll-down {
  margin-top: auto;
}

.hscroll {
  display: flex;
  align-items: center;
  justify-content: space-between;
  flex: none;
  height: 16px;
  margin: 0 17px 0 45px;
  padding: 0 6px;
  border-left: 1px solid #d0d0d0;
  background: linear-gradient(#e0e0e0, #ececec 4px);
}

/* sheet tabs */
.sheet-tabs {
  display: flex;
  align-items: center;
  flex: none;
  height: 40px;
  padding-left: 40px;
  border-top: 1px solid #e4e6e8;
  background: #f1f3f4;
}

.tab-tool {
  width: 31px;
  height: 31px;
}

.tab-strip {
  display: flex;
  align-self: stretch;
  flex: 0 1 840px;
  margin: 0 0 0 8px;
  overflow: hidden;
  border-right: 3px solid #dfe1e3;
}

.sheet-tab {
  gap: 10px;
  padding: 0 16px 0 15px;
  border-right: 1px solid #e4e6e8;
  font-family: Lato, sans-serif;
  font-size: 15px;
  font-weight: bold;
  color: #80868b;
}

.sheet-tab .form {
  margin-right: -5px;
}

.sheet-tab .arrow {
  margin-left: -1px;
}

.sheet-tab.current {
  background: #fff;
  color: #188038;
  box-shadow: 1px 0 3px #ccc;
}

.explore {
  margin: 0 20px 0 auto;
}

/* taskbar */
.taskbar {
  display: flex;
  flex: none;
  height: 40px;
  border-top: 1px solid #0d2c4c;
  background:
    linear-gradient(#9cc9e8 0, transparent 2px),
    linear-gradient(60deg, transparent 868px, #7ea3c6 880px, transparent 896px) no-repeat,
    linear-gradient(70deg, #27689a, #3d92c6 90px, #439bd0 420px, #3591cd 560px, #237abd 620px, #2f80c6 680px, #2574bb 800px, #2f7cc4 870px, #1d62aa 940px, #15498a 1020px, #123c70);
}

.start {
  width: 54px;
  margin-right: 4px;
}

.app {
  width: 60px;
  margin-right: 2px;
}

.app.open,
.app.running {
  border: 1px solid #1a4668;
  border-radius: 3px;
  box-shadow: inset 0 0 1px 1px #cfe6f5;
  background: linear-gradient(150deg, #e0eef8, #a7d0ea 60%, #8cc3e4);
}

.app.running {
  background: linear-gradient(160deg, #9ac8e6, #4b9bcf 60%, #58a9da);
}

.tray {
  display: flex;
  align-items: center;
  gap: 7px;
  margin-left: auto;
  color: #fff;
}

.lang {
  margin: 0 9px 4px 0;
}

.tray time {
  margin: 0 5px 0 10px;
  text-align: center;
  font-size: 11px;
  line-height: 17px;
}

.desktop {
  align-self: stretch;
  width: 14px;
  border: 1px solid #7d9dbf;
  background: linear-gradient(150deg, #5f84ab, #1d4475);
}
```
